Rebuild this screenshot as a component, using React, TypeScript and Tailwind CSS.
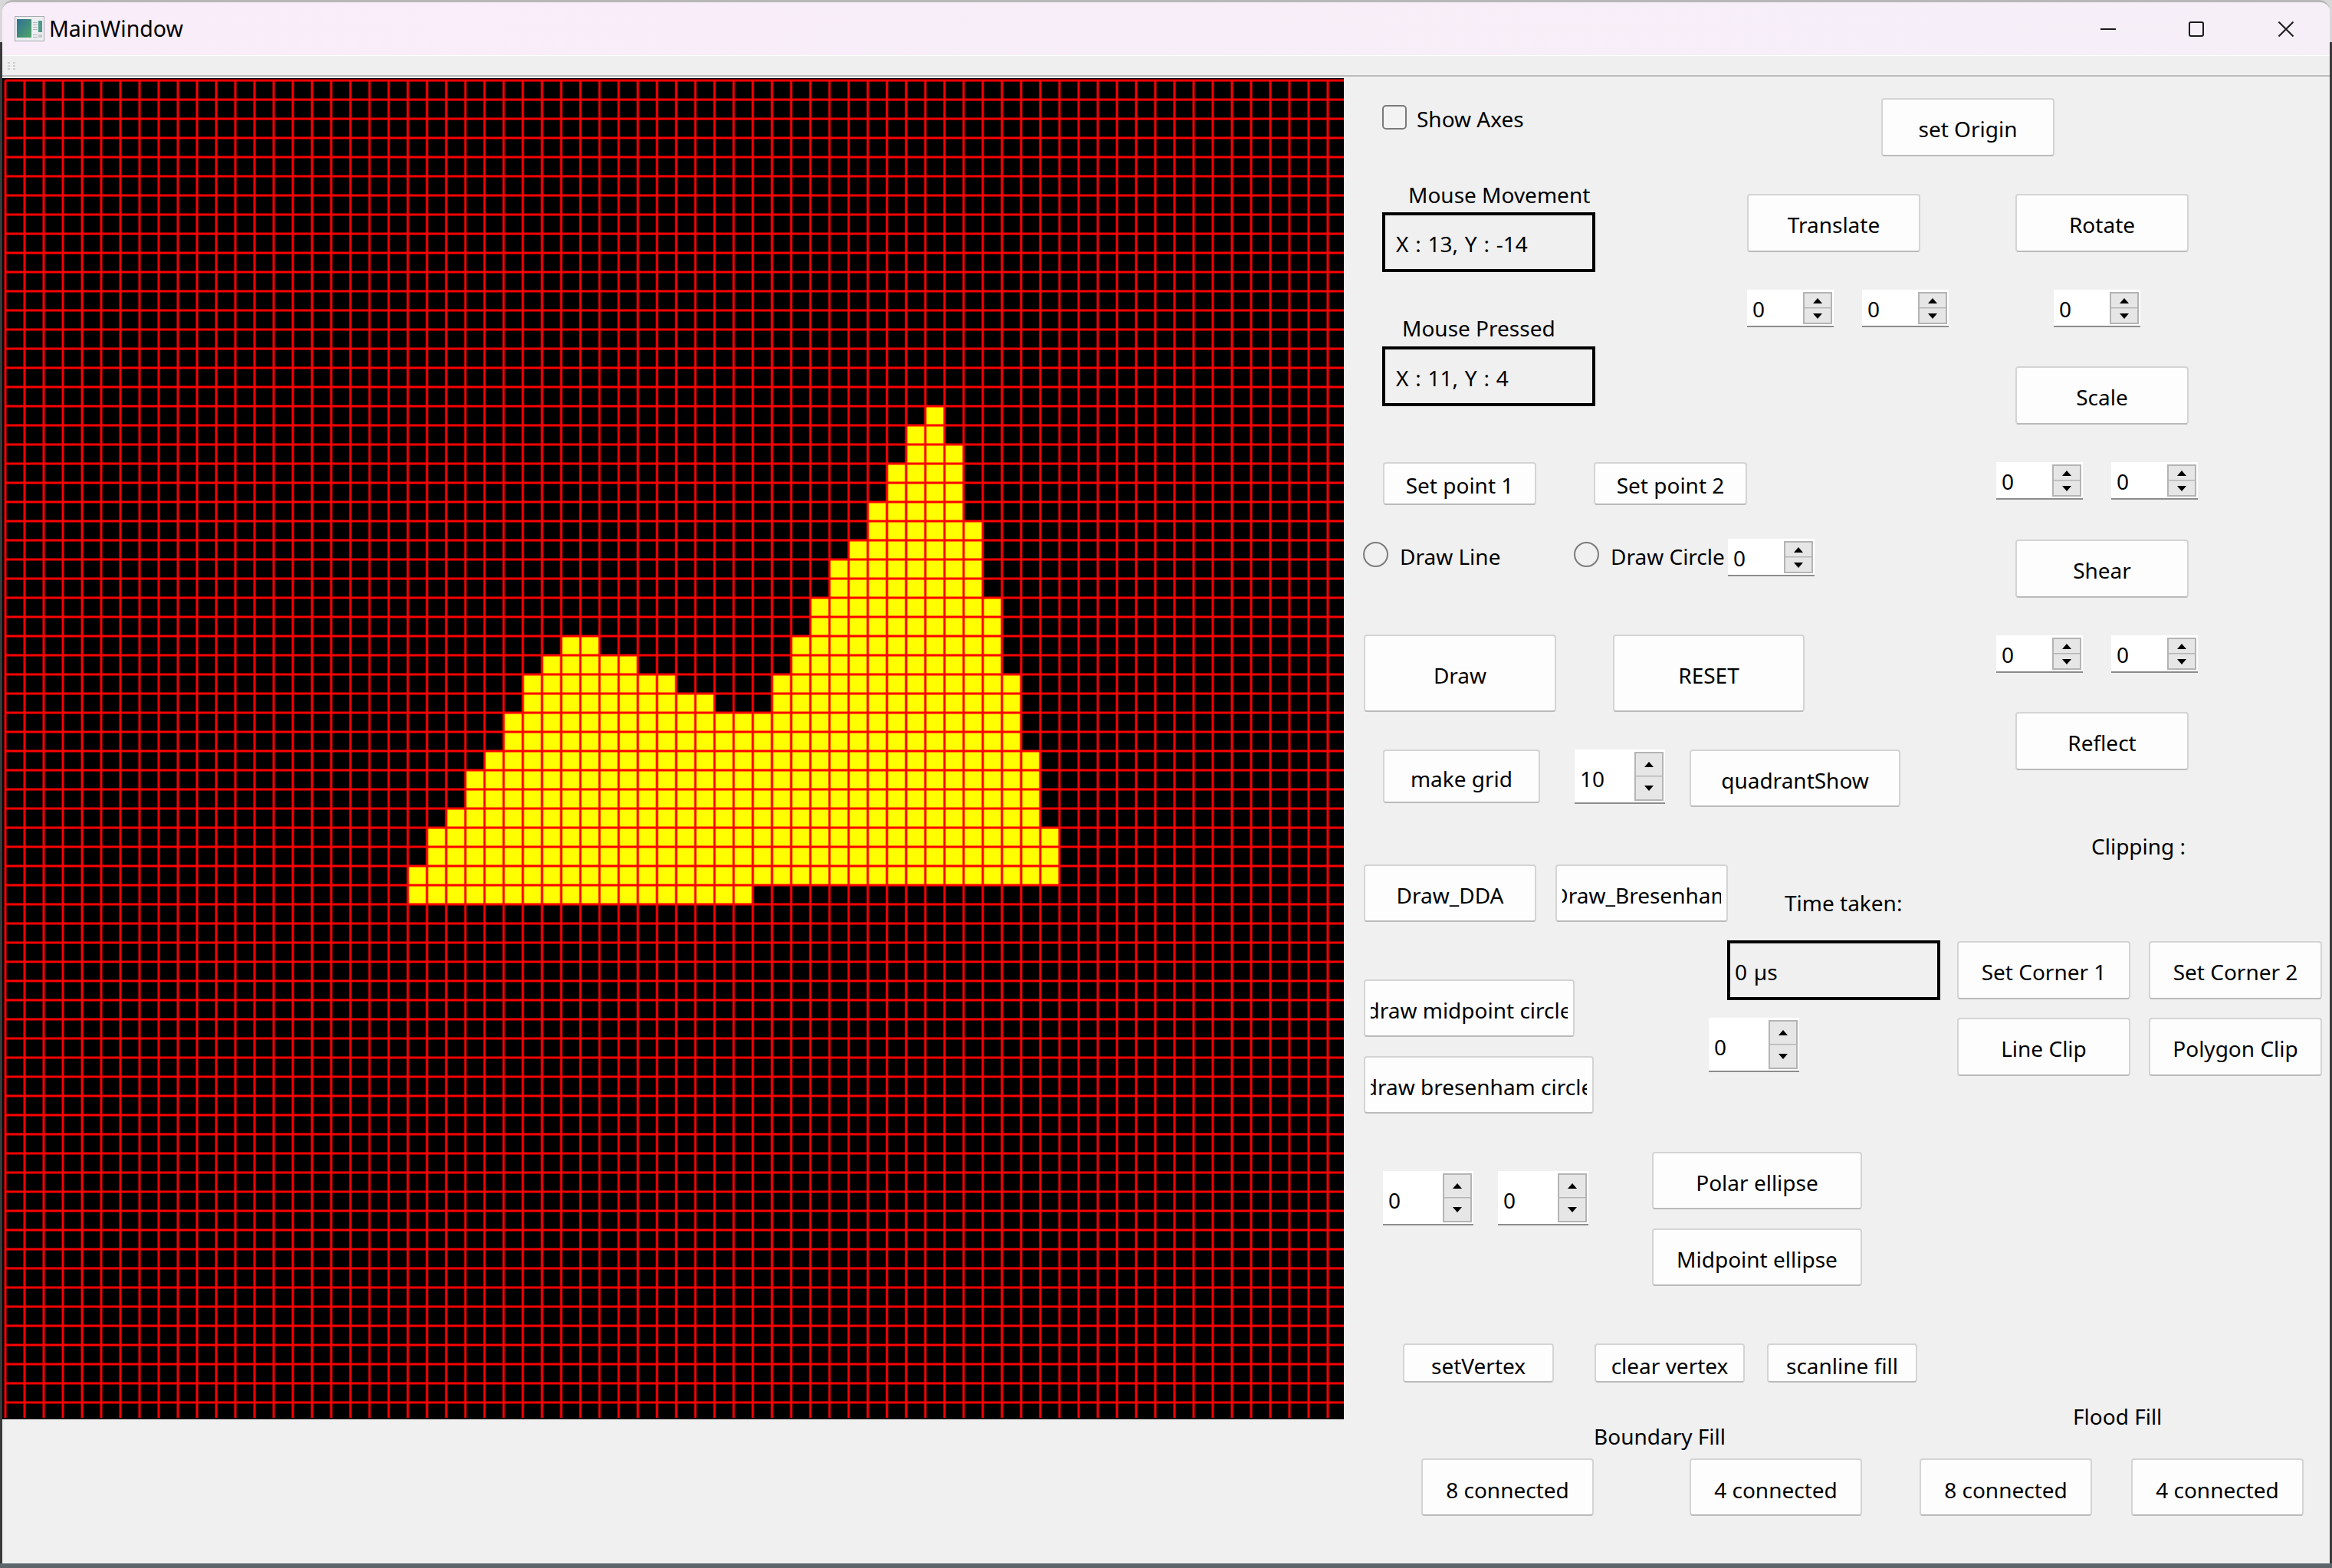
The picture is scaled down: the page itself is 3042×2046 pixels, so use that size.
import type { ReactNode } from "react";

// ----- Canvas data -----

// Filled cells per grid row: [row, first column, last column]
const FILLED: [number, number, number][] = [
  [17, 48, 48], [18, 47, 48], [19, 47, 49], [20, 46, 49], [21, 46, 49], [22, 45, 49],
  [23, 45, 50], [24, 44, 50], [25, 43, 50], [26, 43, 50], [27, 42, 51], [28, 42, 51],
  [29, 29, 30], [29, 41, 51], [30, 28, 32], [30, 41, 51], [31, 27, 34], [31, 40, 52],
  [32, 27, 36], [32, 40, 52], [33, 26, 52], [34, 26, 52], [35, 25, 53], [36, 24, 53],
  [37, 24, 53], [38, 23, 53], [39, 22, 54], [40, 22, 54], [41, 21, 54], [42, 21, 38],
];

const COLS = Array.from({ length: 70 }, (_, i) => 4 + i * 25);
const ROWS = Array.from({ length: 70 }, (_, i) => 3 + i * 25);

function GridCanvas() {
  return (
    <svg width="1750" height="1750" viewBox="0 0 1750 1750" className="mt-[2px] block shrink-0 bg-black">
      {FILLED.map(([r, a, b]) => (
        <rect key={`${r}-${a}`} x={4 + a * 25} y={3 + r * 25} width={(b - a + 1) * 25} height={25} fill="#ffff00" />
      ))}
      {COLS.map((x) => (
        <line key={x} x1={x} y1={3} x2={x} y2={1748} stroke="#ff0000" strokeOpacity={0.5} strokeWidth={4} />
      ))}
      {ROWS.map((y) => (
        <line key={y} x1={4} y1={y} x2={1750} y2={y} stroke="#ff0000" strokeOpacity={0.5} strokeWidth={4} />
      ))}
      {COLS.map((x) => (
        <line key={x} x1={x} y1={3} x2={x} y2={1748} stroke="#ff0000" strokeWidth={2} />
      ))}
      {ROWS.map((y) => (
        <line key={y} x1={4} y1={y} x2={1750} y2={y} stroke="#ff0000" strokeWidth={2} />
      ))}
    </svg>
  );
}

// ----- Small widgets -----

function Btn({ className, children }: { className: string; children: ReactNode }) {
  return (
    <div className={`flex shrink-0 items-center overflow-hidden rounded-[4px] border-2 border-[#d4d4d4] border-b-[#bababa] bg-[#fdfdfd] px-[7px] pt-[4px] ${className}`}>
      <div className="flex w-full justify-center overflow-hidden whitespace-nowrap">
        <span className="shrink-0">{children}</span>
      </div>
    </div>
  );
}

function Spin({ value = "0", big = false }: { value?: string; big?: boolean }) {
  return (
    <div className={`flex shrink-0 items-stretch justify-between border-b-2 border-[#8c8c8c] bg-white pt-[3px] pr-[2px] pb-[2px] pl-[7px] ${big ? "h-[71px] w-[118px]" : "h-[49px] w-[113px]"}`}>
      <span className={`self-center leading-none ${big ? "pt-[6px]" : "pt-[2px]"}`}>{value}</span>
      <div className="flex w-[38px] flex-col border-2 border-[#b4b4b4] bg-[#e6e6e6]">
        <div className="flex flex-1 items-center justify-center border-b border-[#b4b4b4]">
          <svg width="12" height="7" viewBox="0 0 12 7">
            <polygon points="6,0 12,7 0,7" fill="#000" />
          </svg>
        </div>
        <div className="flex flex-1 items-center justify-center border-t border-[#d0d0d0]">
          <svg width="12" height="7" viewBox="0 0 12 7">
            <polygon points="0,0 12,0 6,7" fill="#000" />
          </svg>
        </div>
      </div>
    </div>
  );
}

function Label({ className, children }: { className: string; children: ReactNode }) {
  return <div className={`h-[40px] whitespace-nowrap leading-[40px] ${className}`}>{children}</div>;
}

function ValueBox({ className, children }: { className: string; children: ReactNode }) {
  return <div className={`flex h-[78px] w-[278px] items-center border-[4px] border-black pt-[3px] whitespace-nowrap [word-spacing:1.5px] ${className}`}>{children}</div>;
}

function AppIcon() {
  return (
    <svg width="39" height="33" viewBox="0 0 39 33" className="shrink-0">
      <defs>
        <linearGradient id="pane" x1="0" y1="0" x2="1" y2="1">
          <stop offset="0" stopColor="#2f6f97" />
          <stop offset="1" stopColor="#4fa565" />
        </linearGradient>
      </defs>
      <rect x="0.5" y="0.5" width="38" height="32" fill="#eceef0" stroke="#a9adb0" />
      <rect x="3" y="4" width="19" height="24" fill="url(#pane)" />
      <rect x="24" y="8" width="6" height="1" fill="#b0b4b8" />
      <rect x="24" y="11" width="6" height="1" fill="#b0b4b8" />
      <rect x="24" y="14" width="6" height="1" fill="#b0b4b8" />
      <rect x="24" y="17" width="6" height="1" fill="#b0b4b8" />
      <rect x="24" y="24" width="6" height="1" fill="#b0b4b8" />
      <rect x="24" y="27" width="6" height="1" fill="#b0b4b8" />
      <rect x="31" y="6" width="5" height="15" fill="#4f9a8c" />
      <rect x="31" y="24" width="5" height="4" fill="#c5c8cb" />
    </svg>
  );
}

function TitleBar() {
  return (
    <div className="flex h-[70px] shrink-0 items-center justify-between border-b border-white bg-gradient-to-r from-[#f9edf9] to-[#f6eff8]">
      <div className="ml-[16px] flex items-center gap-[6px] text-[28.5px] text-black">
        <AppIcon />
        <span>MainWindow</span>
      </div>
      <div className="flex items-center">
        <svg width="20" height="20" viewBox="0 0 20 20" className="mr-[95px]">
          <rect x="0" y="9" width="20" height="2" fill="#1a1a1a" />
        </svg>
        <svg width="20" height="20" viewBox="0 0 20 20" className="mr-[97px]">
          <rect x="1" y="1" width="18" height="18" rx="2" fill="none" stroke="#1a1a1a" strokeWidth="2" />
        </svg>
        <svg width="20" height="20" viewBox="0 0 20 20" className="mr-[47px]">
          <path d="M0.5 0.5 L19.5 19.5 M19.5 0.5 L0.5 19.5" fill="none" stroke="#1a1a1a" strokeWidth="2" />
        </svg>
      </div>
    </div>
  );
}

function ToolBar() {
  return (
    <div className="flex h-[25px] shrink-0 items-center bg-[#efefef] pl-[7px]">
      <div className="grid grid-cols-2 gap-x-[4px] gap-y-[2px]">
        {[0, 1, 2, 3, 4, 5].map((i) => (
          <div key={i} className="h-[2px] w-[3px] bg-[#cfcfcf]" />
        ))}
      </div>
    </div>
  );
}

// ----- Control panel -----

function TopSection() {
  return (
    <div className="flex h-[503px] shrink-0">
      <div className="flex w-[526px] shrink-0 flex-col pl-[50px]">
        <div className="mt-[37px] flex h-[32px] items-center gap-[13px]">
          <div className="h-[32px] w-[32px] rounded-[5px] border-2 border-[#7b7b7b] bg-[#f3f3f3]" />
          <span className="pt-[4px]">Show Axes</span>
        </div>
        <Label className="mt-[65px] ml-[34px]">Mouse Movement</Label>
        <ValueBox className="mt-[3px] pl-[14px]">X : 13, Y : -14</ValueBox>
        <Label className="mt-[53px] ml-[26px]">Mouse Pressed</Label>
        <ValueBox className="mt-[4px] pl-[14px]">X : 11, Y : 4</ValueBox>
      </div>
      <div className="flex flex-col">
        <Btn className="mt-[28px] ml-[175px] h-[76px] w-[226px]">set Origin</Btn>
        <div className="mt-[49px] flex gap-[124px]">
          <Btn className="h-[76px] w-[226px]">Translate</Btn>
          <Btn className="h-[76px] w-[226px]">Rotate</Btn>
        </div>
        <div className="mt-[49px] flex">
          <Spin />
          <div className="ml-[37px]"><Spin /></div>
          <div className="ml-[137px]"><Spin /></div>
        </div>
        <Btn className="mt-[51px] ml-[350px] h-[76px] w-[226px]">Scale</Btn>
      </div>
    </div>
  );
}

function MiddleSection() {
  return (
    <div className="flex h-[450px] shrink-0">
      <div className="flex w-[851px] shrink-0 flex-col">
        <div className="ml-[51px] flex gap-[75px]">
          <Btn className="h-[56px] w-[200px]">Set point 1</Btn>
          <Btn className="h-[56px] w-[200px]">Set point 2</Btn>
        </div>
        <div className="mt-[44px] ml-[25px] flex h-[49px] items-start">
          <div className="flex w-[275px] items-start gap-[15px]">
            <div className="mt-[4px] h-[33px] w-[33px] rounded-full border-2 border-[#7b7b7b]" />
            <span className="leading-[46px]">Draw Line</span>
          </div>
          <div className="flex w-[201px] items-start gap-[15px]">
            <div className="mt-[4px] h-[33px] w-[33px] shrink-0 rounded-full border-2 border-[#7b7b7b]" />
            <span className="whitespace-nowrap leading-[46px]">Draw Circle</span>
          </div>
          <Spin />
        </div>
        <div className="mt-[76px] ml-[26px] flex gap-[74px]">
          <Btn className="h-[101px] w-[251px]">Draw</Btn>
          <Btn className="h-[101px] w-[250px]">RESET</Btn>
        </div>
        <div className="mt-[49px] ml-[51px] flex items-start">
          <Btn className="h-[70px] w-[205px] pt-[6px]">make grid</Btn>
          <div className="ml-[45px]"><Spin value="10" big /></div>
          <Btn className="ml-[32px] h-[75px] w-[275px]">quadrantShow</Btn>
        </div>
      </div>
      <div className="flex flex-col">
        <div className="flex gap-[37px]">
          <Spin />
          <Spin />
        </div>
        <Btn className="mt-[52px] ml-[25px] h-[76px] w-[226px]">Shear</Btn>
        <div className="mt-[49px] flex gap-[37px]">
          <Spin />
          <Spin />
        </div>
        <Btn className="mt-[51px] ml-[25px] h-[76px] w-[226px]">Reflect</Btn>
      </div>
    </div>
  );
}

function ClippingSection() {
  return (
    <div className="flex h-[450px] shrink-0">
      <div className="flex w-[476px] shrink-0 flex-col pl-[26px]">
        <div className="mt-[75px] flex gap-[25px]">
          <Btn className="h-[75px] w-[225px]">Draw_DDA</Btn>
          <Btn className="h-[75px] w-[225px]">Draw_Bresenham</Btn>
        </div>
        <Btn className="mt-[75px] h-[75px] w-[275px]">draw midpoint circle</Btn>
        <Btn className="mt-[25px] h-[75px] w-[300px]">draw bresenham circle</Btn>
      </div>
      <div className="flex w-[324px] shrink-0 flex-col">
        <Label className="mt-[105px] ml-[99px]">Time taken:</Label>
        <ValueBox className="mt-[29px] ml-[24px] pl-[6px]">0 µs</ValueBox>
        <div className="mt-[23px]"><Spin big /></div>
      </div>
      <div className="flex flex-col">
        <Label className="mt-[31px] ml-[175px]">Clipping :</Label>
        <div className="mt-[104px] flex gap-[24px]">
          <Btn className="h-[76px] w-[226px]">Set Corner 1</Btn>
          <Btn className="h-[76px] w-[226px]">Set Corner 2</Btn>
        </div>
        <div className="mt-[24px] flex gap-[24px]">
          <Btn className="h-[76px] w-[226px]">Line Clip</Btn>
          <Btn className="h-[76px] w-[226px]">Polygon Clip</Btn>
        </div>
      </div>
    </div>
  );
}

function BottomSections() {
  return (
    <>
      <div className="flex h-[175px] shrink-0 items-start pl-[51px]">
        <div className="mt-[25px] flex gap-[32px]">
          <Spin big />
          <Spin big />
        </div>
        <div className="ml-[83px] flex flex-col gap-[25px]">
          <Btn className="h-[75px] w-[274px]">Polar ellipse</Btn>
          <Btn className="h-[75px] w-[274px]">Midpoint ellipse</Btn>
        </div>
      </div>
      <div className="mt-[75px] ml-[77px] flex shrink-0">
        <Btn className="h-[51px] w-[197px] pt-[6px]">setVertex</Btn>
        <Btn className="ml-[53px] h-[51px] w-[196px] pt-[6px]">clear vertex</Btn>
        <Btn className="ml-[29px] h-[51px] w-[196px] pt-[6px]">scanline fill</Btn>
      </div>
      <div className="flex h-[99px] shrink-0 items-start">
        <Label className="mt-[50px] ml-[326px] w-[170px]">Boundary Fill</Label>
        <Label className="mt-[24px] ml-[455px]">Flood Fill</Label>
      </div>
      <div className="ml-[101px] flex shrink-0">
        <Btn className="h-[75px] w-[225px] pt-[6px]">8 connected</Btn>
        <Btn className="ml-[125px] h-[75px] w-[225px] pt-[6px]">4 connected</Btn>
        <Btn className="ml-[75px] h-[75px] w-[225px] pt-[6px]">8 connected</Btn>
        <Btn className="ml-[51px] h-[75px] w-[225px] pt-[6px]">4 connected</Btn>
      </div>
    </>
  );
}

export default function App() {
  return (
    <div className="flex h-[2046px] w-[3042px] flex-col overflow-hidden bg-[linear-gradient(#d8d8d8_55px,#3a3a3a_55px)] font-['Noto_Sans',sans-serif] text-[28px] text-black">
      <div className="mx-[3px] flex h-[2040px] shrink-0 flex-col overflow-hidden rounded-t-[14px] border-t-[3px] border-[#b7b7b7] bg-[#f0f0f0]">
        <TitleBar />
        <ToolBar />
        <div className="h-[2px] shrink-0 bg-[#bcbcbc]" />
        <div className="flex min-h-0 flex-1 items-start">
          <GridCanvas />
          <div className="flex h-full min-w-0 flex-1 flex-col">
            <TopSection />
            <MiddleSection />
            <ClippingSection />
            <BottomSections />
          </div>
        </div>
      </div>
      <div className="h-[6px] shrink-0 bg-[#5f6669]" />
    </div>
  );
}
